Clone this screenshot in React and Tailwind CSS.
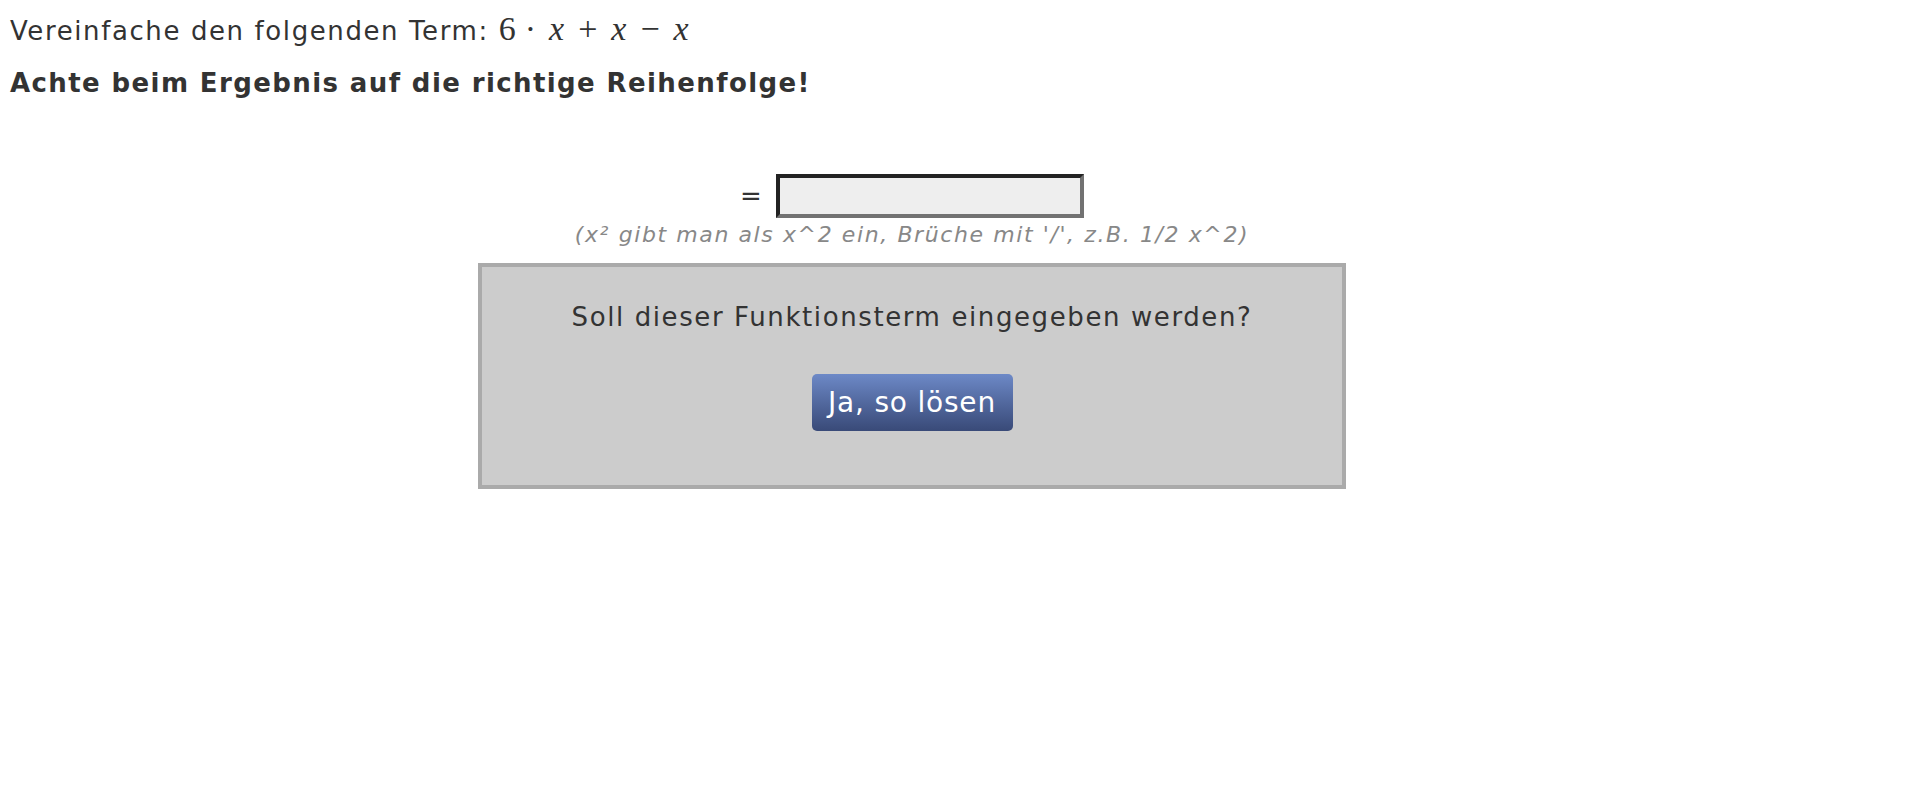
import React from "react";

export default function App() {
  return (
    <div className="min-h-[810px] bg-white font-['DejaVu_Sans',Verdana,sans-serif] text-[#333]">
      <p className="mt-[12px] pl-[10px] text-[26px] leading-[36px] tracking-[1.6px]">
        Vereinfache den folgenden Term:{" "}
        <span className="font-['Liberation_Serif',serif] text-[34px] leading-none tracking-normal">
          <span>6</span>
          <span className="mx-[9px]">·</span>
          <span className="px-[4px] italic">x</span>
          <span className="mx-[10px]">+</span>
          <span className="px-[4px] italic">x</span>
          <span className="mx-[10px]">−</span>
          <span className="px-[4px] italic">x</span>
        </span>
      </p>
      <p className="mt-[16px] pl-[10px] text-[26px] font-bold leading-[36px] tracking-[1.4px]">
        Achte beim Ergebnis auf die richtige Reihenfolge!
      </p>
      <div className="flex w-[1824px] flex-col items-center">
        <div className="mt-[73px] flex items-center gap-[14px]">
          <span className="text-[26px] leading-none">=</span>
          <input
            type="text"
            className="h-[44px] w-[308px] border-4 border-t-[#222] border-l-[#222] border-r-[#727272] border-b-[#727272] bg-[#eeeeee] outline-none"
          />
        </div>
        <p className="mt-[3px] text-[22px] italic leading-[28px] tracking-[1.6px] text-[#888]">
          (x² gibt man als x^2 ein, Brüche mit '/', z.B. 1/2 x^2)
        </p>
        <div className="mt-[14px] flex h-[226px] w-[868px] flex-col items-center border-4 border-[#aaaaaa] bg-[#cccccc] pt-[32px]">
          <p className="text-[26px] leading-[36px] tracking-[1.6px] text-[#333]">
            Soll dieser Funktionsterm eingegeben werden?
          </p>
          <button className="mt-[39px] flex h-[57px] w-[201px] items-center justify-center rounded-[5px] bg-gradient-to-b from-[#6d89c7] to-[#394a78] text-[28px] leading-none tracking-[0.8px] text-white">
            Ja, so lösen
          </button>
        </div>
      </div>
    </div>
  );
}
